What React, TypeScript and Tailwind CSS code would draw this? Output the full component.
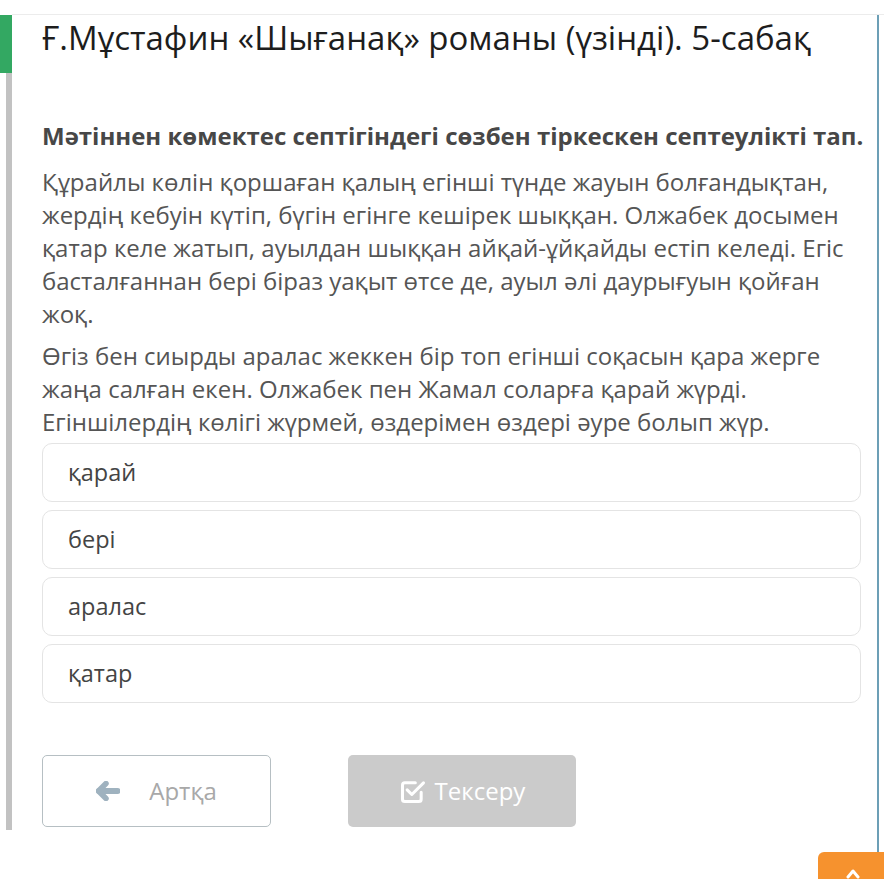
import React from 'react';

const options = ['қарай', 'бері', 'аралас', 'қатар'];

const App = () => {
  return (
    <div
      className="relative w-[884px] h-[879px] overflow-hidden bg-white"
      style={{ fontFamily: '"Open Sans", "Noto Sans", sans-serif' }}
    >
      {/* top strip */}
      <div className="h-[15px] border-b border-[#ececec] ml-[12px]"></div>

      <div className="flex">
        {/* left rail */}
        <div className="w-[12px] shrink-0 flex flex-col">
          <div className="h-[58px] bg-[#33a862]"></div>
          <div className="ml-[6px] w-[6px] h-[757px] bg-[#c2c2c2]"></div>
        </div>

        {/* content */}
        <div className="w-[867px] border-r-2 border-[#6c9fb6] pl-[30px] pr-[16px]">
          <h1 className="text-[33px] leading-[40px] text-[#1d1d1d] pt-[3px]">
            Ғ.Мұстафин «Шығанақ» романы (үзінді). 5-сабақ
          </h1>

          <p className="mt-[63px] text-[24px] leading-[30px] font-bold text-[#474747] whitespace-nowrap">
            Мәтіннен көмектес септігіндегі сөзбен тіркескен септеулікті тап.
          </p>

          <div className="mt-[14px] text-[24px] leading-[33px] text-[#555555]">
            <p>
              Құрайлы көлін қоршаған қалың егінші түнде жауын болғандықтан, жердің кебуін күтіп, бүгін егінге кешірек шыққан. Олжабек досымен қатар келе жатып, ауылдан шыққан айқай-ұйқайды естіп келеді. Егіс басталғаннан бері біраз уақыт өтсе де, ауыл әлі даурығуын қойған жоқ.
            </p>
            <p className="mt-[9px]">
              Өгіз бен сиырды аралас жеккен бір топ егінші соқасын қара жерге жаңа салған екен. Олжабек пен Жамал соларға қарай жүрді. Егіншілердің көлігі жүрмей, өздерімен өздері әуре болып жүр.
            </p>
          </div>

          <div className="mt-[5px] flex flex-col gap-[8px]">
            {options.map((o) => (
              <div
                key={o}
                className="h-[59px] rounded-[10px] border border-[#e4e4e4] flex items-center pl-[25px] text-[23.5px] text-[#444444]"
              >
                {o}
              </div>
            ))}
          </div>

          <div className="mt-[52px] flex gap-[77px] pb-[60px]">
            <div className="w-[229px] h-[72px] rounded-[5px] border border-[#b6bfc3] flex items-center justify-center gap-[29px] text-[24px] text-[#a8a8a8]">
              <svg width="24" height="20" viewBox="0 0 24 20">
                <path d="M10 2.5 L2.5 10 L10 17.5" fill="none" stroke="#9fb2bf" strokeWidth="5.5" strokeLinecap="round" strokeLinejoin="round" />
                <path d="M3 10 H21.5" fill="none" stroke="#9fb2bf" strokeWidth="6" strokeLinecap="round" />
              </svg>
              <span>Артқа</span>
            </div>
            <div className="w-[228px] h-[72px] rounded-[5px] bg-[#cbcbcb] flex items-center justify-center gap-[8px] text-[24px] text-white">
              <svg width="28" height="28" viewBox="0 0 24 24" fill="none" stroke="white" strokeWidth="2.6" strokeLinecap="round" strokeLinejoin="round">
                <path d="M19 13v6a2 2 0 0 1-2 2H5a2 2 0 0 1-2-2V7a2 2 0 0 1 2-2h9" />
                <path d="M7 11l4 4 10-10" />
              </svg>
              <span>Тексеру</span>
            </div>
          </div>
        </div>
      </div>

      {/* scroll-to-top button */}
      <div className="absolute left-[818px] top-[852px] w-[70px] h-[50px] rounded-tl-[6px] bg-[#f6922e] flex justify-center pt-[15px]">
        <svg width="16" height="12" viewBox="0 0 16 12">
          <path d="M3 10 L8 4 L13 10" fill="none" stroke="white" strokeWidth="3" strokeLinecap="round" strokeLinejoin="round" />
        </svg>
      </div>
    </div>
  );
};

export default App;
